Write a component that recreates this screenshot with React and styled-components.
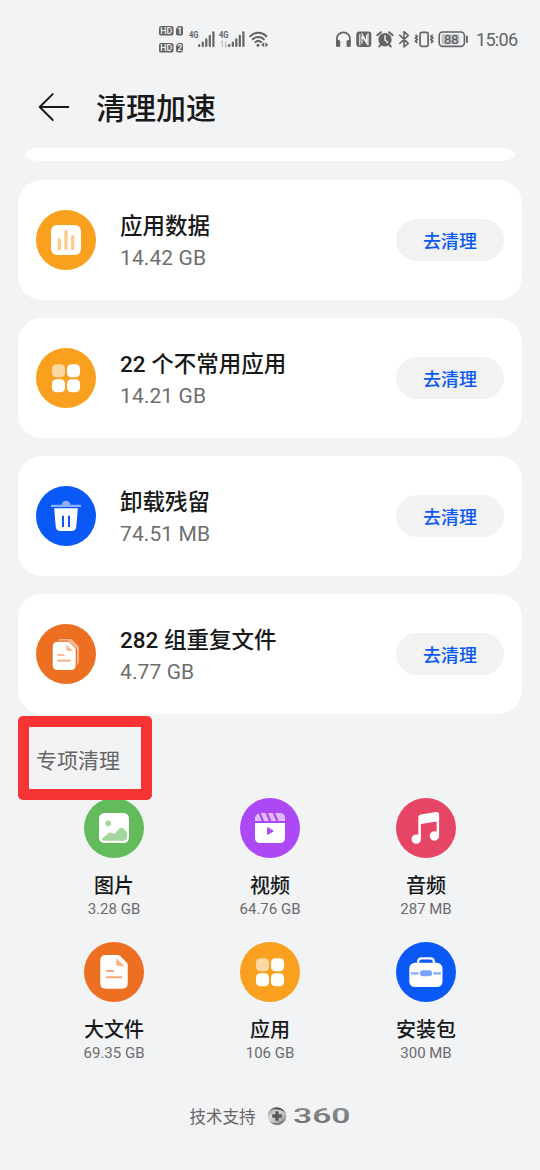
import React from "react";
import styled, { createGlobalStyle } from "styled-components";

const GlobalStyle = createGlobalStyle`
  * { box-sizing: border-box; }
  body {
    margin: 0;
    background: #f1f3f5;
    font-family: Roboto, "Noto Sans CJK SC", sans-serif;
  }
`;

const Screen = styled.main`
  width: 540px;
  height: 1170px;
  overflow: hidden;
  display: flex;
  flex-direction: column;
  background: #f1f3f5;
  color: #191919;
`;

const StatusBar = styled.div`
  height: 78px;
  flex: none;
  display: flex;
  align-items: center;
  justify-content: space-between;
  padding: 0 22px 0 158px;
  color: #636466;
`;

const StatusGroup = styled.div`
  display: flex;
  align-items: center;
  gap: ${(p) => p.$gap}px;
`;

const Clock = styled.span`
  width: 42px;
  margin-left: 3px;
  font-size: 18px;
  line-height: 22px;
  letter-spacing: -0.7px;
  white-space: nowrap;
  padding-top: 2px;
`;

const Glyph = styled.svg`
  display: block;
  flex: none;
  overflow: visible;
`;

const Header = styled.header`
  height: 70px;
  flex: none;
  display: flex;
  align-items: center;
  gap: 26px;
  padding: 0 38px 12px;
`;

const Heading = styled.h1`
  margin: 0;
  padding-top: 4px;
  font-size: 30px;
  line-height: 44px;
  font-weight: 500;
`;

const ClippedCard = styled.div`
  height: 13px;
  flex: none;
  margin: 0 25px 19px;
  background: #fff;
  border-radius: 16px / 6.5px;
`;

const CardList = styled.section`
  display: flex;
  flex-direction: column;
  gap: 18px;
  padding: 0 18px;
`;

const Card = styled.article`
  height: 120px;
  display: flex;
  align-items: center;
  padding: 0 18px;
  background: #fff;
  border-radius: 24px;
`;

const CardText = styled.div`
  flex: 1;
  margin-left: 24px;
  padding-top: 4px;
`;

const CardTitle = styled.div`
  font-size: 22.5px;
  line-height: 32px;
  font-weight: 500;
`;

const CardSize = styled.div`
  font-size: 21px;
  line-height: 32px;
  color: #6e6e6e;
  letter-spacing: 0.1px;
`;

const CleanButton = styled.button`
  width: 108px;
  height: 42px;
  padding: 3px 0 0;
  border: 0;
  border-radius: 21px;
  background: #f2f2f2;
  color: #0a59f0;
  font: 500 18px/26px Roboto, "Noto Sans CJK SC", sans-serif;
`;

const SectionHead = styled.div`
  position: relative;
  height: 84px;
  flex: none;
  padding: 32px 36px 0;
`;

const SectionTitle = styled.h2`
  margin: 0;
  font-size: 21px;
  line-height: 30px;
  font-weight: 400;
  color: #666;
`;

const Highlight = styled.div`
  position: absolute;
  left: 18px;
  top: 2px;
  width: 134px;
  height: 84px;
  border: 11px solid #f73434;
  border-radius: 5px;
  z-index: 1;
`;

const Grid = styled.section`
  display: grid;
  grid-template-columns: repeat(3, 156px);
  grid-auto-rows: 144px;
  justify-content: center;
`;

const Tile = styled.div`
  display: flex;
  flex-direction: column;
  align-items: center;
`;

const TileName = styled.div`
  margin-top: 13px;
  font-size: 20px;
  line-height: 30px;
  font-weight: 500;
`;

const TileSize = styled.div`
  margin-top: -1px;
  font-size: 15px;
  line-height: 18px;
  color: #6c6c6c;
`;

const Footer = styled.footer`
  display: flex;
  align-items: center;
  justify-content: center;
  height: 30px;
  margin-top: 15px;
  font-size: 16.5px;
  color: #666;
`;

const Brand = styled(Glyph)`
  margin-left: 11px;
`;

/* Status icons */

function SimBadges() {
  return (
    <Glyph width="26" height="28" viewBox="158 25 26 28">
      {[0, 17].map((dy, i) => (
        <g key={dy} transform={`translate(0 ${dy})`}>
          <rect x="159" y="26" width="14.5" height="9.6" rx="2.2" fill="currentColor" />
          <path d="M178.3 26H181a2 2 0 0 1 2 2v5.6a2 2 0 0 1-2 2h-3a2 2 0 0 1-2-2v-5.2z" fill="currentColor" />
          <text x="166.2" y="33.9" textAnchor="middle" fontSize="8.8" fontWeight="500" fill="#f1f3f5">HD</text>
          <text x="179.6" y="33.9" textAnchor="middle" fontSize="8.5" fontWeight="700" fill="#f1f3f5">{i + 1}</text>
        </g>
      ))}
    </Glyph>
  );
}

function Signal({ data }) {
  return (
    <Glyph width="26" height="18" viewBox="188 30 26 18">
      <text x="188" y="38" fontSize="9.6" fontWeight="700" textLength="9.5" lengthAdjust="spacingAndGlyphs" fill="currentColor">4G</text>
      {data && (
        <path d="M191.5 47v-6l-2 2.2M194.5 41v6l2-2.2" fill="none" stroke="#c3c4c6" strokeWidth="1.2" />
      )}
      <path
        d="M198.2 45.2v.8M201.8 42.5V46M205.3 39.4V46M208.8 35.8V46M212.4 32.3V46"
        stroke="currentColor"
        strokeWidth="2.2"
        strokeLinecap="round"
      />
    </Glyph>
  );
}

function Wifi() {
  return (
    <Glyph width="20" height="18" viewBox="250 30 20 18">
      <g fill="none" stroke="currentColor" strokeWidth="2" strokeLinecap="round">
        <path d="M250.2 36.2a11.5 11.5 0 0 1 16.2 0" />
        <path d="M252.8 39.3a8 8 0 0 1 11 0" />
        <path d="M255.4 42.2a4.3 4.3 0 0 1 5.8 0" />
      </g>
      <circle cx="258" cy="45.3" r="1.5" fill="currentColor" />
      <path d="M264.2 42.2v5l-2.9-2.5zM265.4 42.2v5l2.9-2.5z" fill="currentColor" />
    </Glyph>
  );
}

function Headphones() {
  return (
    <Glyph width="16" height="17" viewBox="335.3 31 16 17">
      <path d="M337.2 42v-3.2a6.5 6.5 0 0 1 13 0V42" fill="none" stroke="currentColor" strokeWidth="1.8" />
      <rect x="336.3" y="40" width="4.2" height="7" rx="1.6" fill="currentColor" />
      <rect x="346.9" y="40" width="4.2" height="7" rx="1.6" fill="currentColor" />
    </Glyph>
  );
}

function Nfc() {
  return (
    <Glyph width="16" height="17" viewBox="356 31 16 17">
      <rect x="356.3" y="31.6" width="15" height="15.4" rx="3" fill="currentColor" />
      <path
        d="M359.8 45.6V34.2M361.6 33.4l5 8.6V35M368 33v11.8L362 36.500V43.500"
        fill="none"
        stroke="#f1f3f5"
        strokeWidth="1.2"
        strokeLinejoin="round"
      />
    </Glyph>
  );
}

function Alarm() {
  return (
    <Glyph width="18" height="17" viewBox="376 31 18 17">
      <circle cx="385" cy="39.7" r="6.7" fill="currentColor" />
      <path
        d="M377.3 35.2l3.6-3M392.7 35.2l-3.6-3M381 44.5l-1.8 2M389 44.5l1.8 2"
        stroke="currentColor"
        strokeWidth="1.9"
        strokeLinecap="round"
      />
      <path d="M385 35.7v4.3l2.6 2.4" fill="none" stroke="#f1f3f5" strokeWidth="1.4" strokeLinecap="round" />
    </Glyph>
  );
}

function Bluetooth() {
  return (
    <Glyph width="11" height="17" viewBox="399 31 11 17">
      <path
        d="M399.7 35.2l8.6 8.1-4.3 3.7V31.7l4.3 3.7-8.6 8.1"
        fill="none"
        stroke="currentColor"
        strokeWidth="1.6"
        strokeLinejoin="round"
        strokeLinecap="round"
      />
    </Glyph>
  );
}

function Vibrate() {
  return (
    <Glyph width="19" height="17" viewBox="414.5 31 19 17">
      <rect x="420.6" y="32.3" width="8" height="14" rx="1.6" fill="none" stroke="currentColor" strokeWidth="1.7" />
      <path
        d="M416 34.8l1.7 1.6-1.7 1.6 1.7 1.6-1.7 1.6 1.7 1.6M433.2 34.8l-1.7 1.6 1.7 1.6-1.7 1.6 1.7 1.6-1.7 1.6"
        fill="none"
        stroke="currentColor"
        strokeWidth="1.8"
      />
    </Glyph>
  );
}

function Battery() {
  return (
    <Glyph width="31" height="17" viewBox="439.5 31 31 17">
      <rect x="440.7" y="32" width="25.2" height="14.4" rx="3.6" fill="none" stroke="currentColor" strokeWidth="1.6" />
      <rect x="443" y="34.2" width="18" height="10" rx="1.4" fill="#c4c5c7" />
      <path d="M468.4 36.5v5.4" stroke="currentColor" strokeWidth="1.9" strokeLinecap="round" />
      <text x="452.7" y="43.8" textAnchor="middle" fontSize="13" fontWeight="400" fill="#555658">88</text>
    </Glyph>
  );
}

/* Category icons, all on a 60-unit disc */

function Disc({ color, children }) {
  return (
    <Glyph width="60" height="60" viewBox="0 0 60 60">
      <circle cx="30" cy="30" r="30" fill={color} />
      {children}
    </Glyph>
  );
}

const DataIcon = () => (
  <Disc color="#f9a01e">
    <rect x="15" y="15" width="30" height="30" rx="6" fill="#fff" />
    <path d="M23.4 30v8.4M30 21.7v16.7M36.6 26.7v11.7" stroke="#fbcb8a" strokeWidth="3.3" strokeLinecap="round" />
  </Disc>
);

const AppsIcon = () => (
  <Disc color="#f9a01e">
    <rect x="16" y="16.2" width="13" height="13" rx="4.3" fill="#fdd8a4" />
    <rect x="31" y="16.2" width="13" height="13" rx="4.3" fill="#fff" />
    <rect x="16" y="31.2" width="13" height="13" rx="4.3" fill="#fff" />
    <rect x="31" y="31.2" width="13" height="13" rx="4.3" fill="#fff" />
  </Disc>
);

const TrashIcon = () => (
  <Disc color="#0a59f7">
    <path d="M15.6 18.8h10c.6-2.4 2.2-4 4.4-4s3.8 1.6 4.4 4h10a.6.6 0 0 1 .6.6v1a.6.6 0 0 1-.6.6H15.6a.6.6 0 0 1-.6-.6v-1a.6.6 0 0 1 .6-.6z" fill="#8cb0fb" />
    <path d="M18.2 22.2h23.6l-1.5 18.2c-.3 3.2-2 4.6-4.8 4.6h-11c-2.8 0-4.5-1.4-4.8-4.6z" fill="#fff" />
    <path d="M27 29.7v11.3M33 29.7v11.3" stroke="#0a59f7" strokeWidth="2" />
  </Disc>
);

const DuplicatesIcon = () => (
  <Disc color="#ed6f21">
    <path d="M22 16.5c1-1.2 2-1.5 3.4-1.5H34c1 0 1.6.3 2.3 1l5.5 5.5c.8.8 1.2 1.5 1.2 2.7V37c0 1.8-.6 3-2 4V25.5L32 16.5z" fill="#f6b690" />
    <path d="M21.7 17.8h9.6c1 0 1.7.3 2.4 1l5 5c.7.7 1 1.4 1 2.4v14.8c0 3.3-1.7 5-5 5h-13c-3.3 0-5-1.7-5-5V22.8c0-3.3 1.7-5 5-5z" fill="#fff" />
    <path d="M30.3 20.5l6.5 6.5h-4.3c-1.5 0-2.2-.7-2.2-2.2z" fill="#f6b690" />
    <path d="M22 31h5.8M22 36.7h12" stroke="#f6a679" strokeWidth="1.7" strokeLinecap="round" />
  </Disc>
);

const ImageIcon = () => (
  <Disc color="#64bb5c">
    <rect x="15" y="15" width="30" height="30" rx="5.5" fill="#fff" />
    <circle cx="24.3" cy="25.4" r="2.8" fill="#a2d69d" />
    <path d="M18.2 40.5l6.3-5.3c1.3-1.1 2.6-1 3.9-.1 1.2.9 2.2.8 3.2-.3l4-4.2c1.3-1.2 2.5-1.2 3.7-.1l2.7 2.5c.7.7 1 1.3 1 2.2v3.5c0 2.6-1.4 4-4 4H20.5c-2.5 0-3.3-1.3-2.3-2.2z" fill="#a2d69d" />
  </Disc>
);

const VideoIcon = () => (
  <Disc color="#ac49f5">
    <g fill="#e0bafc">
      <path d="M18.6 15.4L21.8 23H15v-2.8c0-2.3 1.4-4.2 3.6-4.8z" />
      <path d="M20.8 15h4.7l3.4 8h-4.7z" />
      <path d="M28 15h4.7l3.4 8h-4.7z" />
      <path d="M35.2 15H40c3.2 0 5 1.8 5 5v3h-6.4z" />
    </g>
    <path d="M15 25h30v14.5c0 3.7-1.8 5.5-5.5 5.5h-19c-3.7 0-5.5-1.8-5.5-5.5z" fill="#fff" />
    <path d="M27.6 29.6l5.6 3.4-5.6 3.5z" fill="#ac49f5" stroke="#ac49f5" strokeWidth="1" strokeLinejoin="round" />
  </Disc>
);

const MusicIcon = () => (
  <Disc color="#e64566">
    <path
      d="M22.3 19.6c0-1.8.8-2.8 2.6-3.1l15-2.4c2-.3 3.2.7 3.2 2.7V37.6a4.7 4.7 0 1 1-2.5-3.8V23.5L24.900 26v14.7a4.7 4.7 0 1 1-2.6-3.8z"
      fill="#fff"
    />
  </Disc>
);

const DocumentIcon = () => (
  <Disc color="#ed6f21">
    <path d="M22 13h11.5c1.2 0 2 .3 2.9 1.2l6.1 6.1c.9.9 1.2 1.7 1.2 2.9V41c0 3.8-1.9 5.7-5.7 5.7H22c-3.8 0-5.7-1.9-5.7-5.7V18.7c0-3.8 1.9-5.7 5.7-5.7z" fill="#fff" />
    <path d="M32.2 16l8.4 8.2h-5.3c-2.1 0-3.1-1-3.1-3z" fill="#f6b690" />
    <path d="M23 29h6.2M23 35.3h14.2" stroke="#f6a679" strokeWidth="2" strokeLinecap="round" />
  </Disc>
);

const PackageIcon = () => (
  <Disc color="#0a59f7">
    <path d="M22.1 21.5v-1.3c0-2.5 1.2-3.8 3.7-3.8h8.4c2.5 0 3.7 1.3 3.7 3.8v1.3" fill="none" stroke="#fff" strokeWidth="2.2" />
    <rect x="13.3" y="20.8" width="33.2" height="24.3" rx="5.5" fill="#fff" />
    <path d="M15 31.3h7.7M37.3 31.3H45" stroke="#82aafb" strokeWidth="2.3" />
    <rect x="24" y="28.3" width="12" height="6" rx="2.7" fill="#7aa3fa" />
  </Disc>
);

function BrandMark() {
  return (
    <Brand width="84" height="20" viewBox="0 0 84 20">
      <defs>
        <linearGradient id="ball" x1="0.1" y1="0" x2="0.9" y2="1">
          <stop offset="0" stopColor="#777" />
          <stop offset="0.35" stopColor="#ddd" />
          <stop offset="0.65" stopColor="#bbb" />
          <stop offset="1" stopColor="#777" />
        </linearGradient>
        <linearGradient id="word" x1="0" y1="0" x2="0" y2="1">
          <stop offset="0" stopColor="#919191" />
          <stop offset="1" stopColor="#6d6d6d" />
        </linearGradient>
      </defs>
      <circle cx="10" cy="10" r="9.3" fill="url(#ball)" />
      <path d="M4 3.5c5-4 12-2 14.6 3.5C15 3.8 10 2.8 4 3.5z" fill="#555" />
      <path d="M3 15.5c5 3 11 2 15.5-3C16 18.5 8.5 21.5 3 15.5z" fill="#777" />
      <path d="M10 5.2v9.6M5.2 10h9.6" stroke="#5a5a5a" strokeWidth="3.4" />
      <text
        x="26"
        y="17"
        fontFamily="Roboto, sans-serif"
        fontWeight="600"
        fontSize="21"
        textLength="57.5"
        lengthAdjust="spacingAndGlyphs"
        fill="url(#word)"
      >
        360
      </text>
    </Brand>
  );
}

const cards = [
  { title: "应用数据", size: "14.42 GB", Icon: DataIcon },
  { title: "22 个不常用应用", size: "14.21 GB", Icon: AppsIcon },
  { title: "卸载残留", size: "74.51 MB", Icon: TrashIcon },
  { title: "282 组重复文件", size: "4.77 GB", Icon: DuplicatesIcon },
];

const tiles = [
  { name: "图片", size: "3.28 GB", Icon: ImageIcon },
  { name: "视频", size: "64.76 GB", Icon: VideoIcon },
  { name: "音频", size: "287 MB", Icon: MusicIcon },
  { name: "大文件", size: "69.35 GB", Icon: DocumentIcon },
  { name: "应用", size: "106 GB", Icon: AppsIcon },
  { name: "安装包", size: "300 MB", Icon: PackageIcon },
];

export default function App() {
  return (
    <Screen>
      <GlobalStyle />
      <StatusBar>
        <StatusGroup $gap={4.5}>
          <SimBadges />
          <Signal />
          <Signal data />
          <Wifi />
        </StatusGroup>
        <StatusGroup $gap={4.5}>
          <Headphones />
          <Nfc />
          <Alarm />
          <Bluetooth />
          <Vibrate />
          <Battery />
          <Clock>15:06</Clock>
        </StatusGroup>
      </StatusBar>
      <Header>
        <Glyph width="32" height="30" viewBox="38 91.5 32 30">
          <path
            d="M52.7 93.6L39.7 106.5l13 13M39.7 106.5H68.4"
            fill="none"
            stroke="#191919"
            strokeWidth="1.9"
            strokeLinecap="round"
            strokeLinejoin="round"
          />
        </Glyph>
        <Heading>清理加速</Heading>
      </Header>
      <ClippedCard />
      <CardList>
        {cards.map(({ title, size, Icon }) => (
          <Card key={title}>
            <Icon />
            <CardText>
              <CardTitle>{title}</CardTitle>
              <CardSize>{size}</CardSize>
            </CardText>
            <CleanButton>去清理</CleanButton>
          </Card>
        ))}
      </CardList>
      <SectionHead>
        <SectionTitle>专项清理</SectionTitle>
        <Highlight />
      </SectionHead>
      <Grid>
        {tiles.map(({ name, size, Icon }) => (
          <Tile key={name}>
            <Icon />
            <TileName>{name}</TileName>
            <TileSize>{size}</TileSize>
          </Tile>
        ))}
      </Grid>
      <Footer>
        技术支持
        <BrandMark />
      </Footer>
    </Screen>
  );
}
